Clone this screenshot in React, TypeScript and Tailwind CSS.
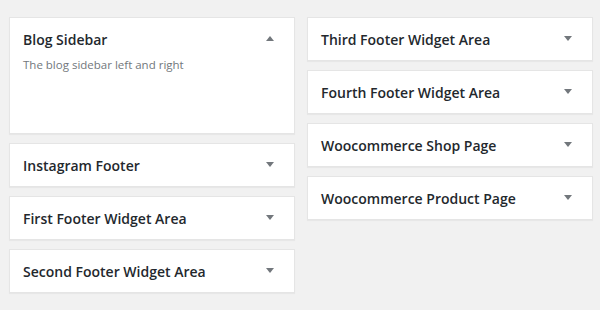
const Arrow = ({ up }: { up?: boolean }) => (
  <svg width="8" height="5" viewBox="0 0 8 5" className="shrink-0">
    <path d={up ? "M0 5 L4 0 L8 5 Z" : "M0 0 L8 0 L4 5 Z"} fill="#72777c" />
  </svg>
);

const Area = ({ title, desc, open }: { title: string; desc?: string; open?: boolean }) => (
  <div
    className={`bg-white border border-[#e5e5e5] shadow-[0_1px_1px_rgba(0,0,0,0.04)] ${
      open ? "h-[117px]" : "h-[44px]"
    }`}
  >
    <div className="flex items-start justify-between pl-[13px] pr-[20px] pt-[12px]">
      <h2 className="text-[14px] font-semibold text-[#23282d] leading-[20px]">{title}</h2>
      <div className="pt-[6px]">
        <Arrow up={open} />
      </div>
    </div>
    {desc && <p className="pl-[13px] pt-[7px] text-[11.5px] text-[#72777c] leading-[16px]">{desc}</p>}
  </div>
);

export default function App() {
  const left = ["Instagram Footer", "First Footer Widget Area", "Second Footer Widget Area"];
  const right = [
    "Third Footer Widget Area",
    "Fourth Footer Widget Area",
    "Woocommerce Shop Page",
    "Woocommerce Product Page",
  ];
  return (
    <div className="w-[600px] h-[310px] bg-[#f1f1f1] flex gap-[12px] pl-[9px] pt-[17px] font-['Open_Sans',sans-serif]">
      <div className="w-[286px] flex flex-col gap-[9px]">
        <Area title="Blog Sidebar" desc="The blog sidebar left and right" open />
        {left.map((t) => (
          <Area key={t} title={t} />
        ))}
      </div>
      <div className="w-[286px] flex flex-col gap-[9px]">
        {right.map((t) => (
          <Area key={t} title={t} />
        ))}
      </div>
    </div>
  );
}
